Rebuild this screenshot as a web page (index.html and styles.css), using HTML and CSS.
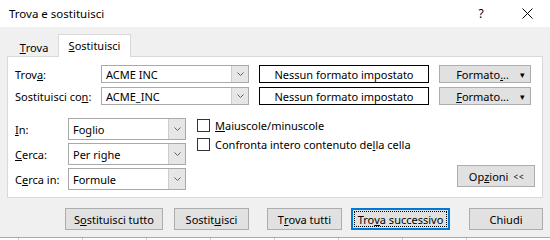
FILE: index.html
```html
<!DOCTYPE html>
<html lang="it">
<head>
<meta charset="utf-8">
<title>Trova e sostituisci</title>
<link rel="stylesheet" href="styles.css">
</head>
<body>
<div class="titlebar">
  <span class="title">Trova e sostituisci</span>
  <span class="help">?</span>
  <span class="close"><svg width="11" height="11" viewBox="0 0 11 11"><path d="M0.5 0.5 L10.5 10.5 M10.5 0.5 L0.5 10.5" stroke="#000" stroke-width="1" fill="none"/></svg></span>
</div>

<div class="tabs">
  <div class="tab"><u>T</u>rova</div>
  <div class="tab active"><u>S</u>ostituisci</div>
</div>

<div class="panel">
  <div class="find-grid">
    <label class="lbl">Trov<u>a</u>:</label>
    <div class="combo"><span class="value">ACME INC</span><span class="drop"><svg width="7" height="4" viewBox="0 0 7 4"><path d="M0.5 0.5 L3.5 3.5 L6.5 0.5" stroke="#606060" fill="none"/></svg></span></div>
    <div class="fmt-box">Nessun formato impostato</div>
    <div class="fmt-btn"><span>Formato<u>.</u>..</span><span class="arrow">▾</span></div>

    <label class="lbl">Sostituisci co<u>n</u>:</label>
    <div class="combo"><span class="value">ACME_INC</span><span class="drop"><svg width="7" height="4" viewBox="0 0 7 4"><path d="M0.5 0.5 L3.5 3.5 L6.5 0.5" stroke="#606060" fill="none"/></svg></span></div>
    <div class="fmt-box">Nessun formato impostato</div>
    <div class="fmt-btn"><span><u>F</u>ormato...</span><span class="arrow">▾</span></div>
  </div>

  <div class="options">
    <div class="opt-grid">
      <label class="lbl"><u>I</u>n:</label>
      <div class="combo tall"><span class="value">Foglio</span><span class="drop"><svg width="7" height="4" viewBox="0 0 7 4"><path d="M0.5 0.5 L3.5 3.5 L6.5 0.5" stroke="#606060" fill="none"/></svg></span></div>
      <label class="lbl"><u>C</u>erca:</label>
      <div class="combo tall"><span class="value">Per righe</span><span class="drop"><svg width="7" height="4" viewBox="0 0 7 4"><path d="M0.5 0.5 L3.5 3.5 L6.5 0.5" stroke="#606060" fill="none"/></svg></span></div>
      <label class="lbl">C<u>e</u>rca in:</label>
      <div class="combo tall"><span class="value">Formule</span><span class="drop"><svg width="7" height="4" viewBox="0 0 7 4"><path d="M0.5 0.5 L3.5 3.5 L6.5 0.5" stroke="#606060" fill="none"/></svg></span></div>
    </div>
    <div class="checks">
      <div class="check"><span class="box"></span><span><u>M</u>aiuscole/minuscole</span></div>
      <div class="check"><span class="box"></span><span>Confronta intero contenuto de<u>l</u>la cella</span></div>
    </div>
    <div class="spacer"></div>
    <div class="btn opzioni">Op<u>z</u>ioni<span class="chev">&lt; &lt;</span></div>
  </div>
</div>

<div class="actions">
  <div class="btn wide">S<u>o</u>stituisci tutto</div>
  <div class="btn std gap-11">Sostit<u>u</u>isci</div>
  <div class="btn std gap-18">T<u>r</u>ova tutti</div>
  <div class="btn wide focus gap-9">Tro<u>v</u>a successivo</div>
  <div class="btn std close-btn gap-19">Chiudi</div>
</div>

<div class="sheet-edge"></div>
</body>
</html>
```

FILE: styles.css
```css
* {
  box-sizing: border-box;
}

body {
  margin: 0;
  width: 550px;
  height: 240px;
  overflow: hidden;
  background: #f0f0f0;
  font-family: "Noto Sans", "Open Sans", sans-serif;
  font-size: 11px;
  color: #000;
}

u {
  text-decoration: underline;
  text-underline-offset: 1px;
}

/* title bar */
.titlebar {
  height: 27px;
  background: #fff;
  display: flex;
  align-items: center;
  padding-left: 9px;
}

.title {
  flex: 1;
  font-size: 11.5px;
}

.help,
.close {
  width: 46px;
  display: flex;
  justify-content: center;
  align-items: center;
  font-size: 12px;
}

/* tabs */
.tabs {
  display: flex;
  align-items: flex-end;
  height: 22px;
  margin-top: 7px;
  padding-left: 10px;
}

.tab {
  width: 48px;
  height: 18px;
  display: flex;
  align-items: center;
  justify-content: center;
}

.tab.active {
  position: relative;
  z-index: 1;
  width: 73px;
  height: 23px;
  margin-bottom: -1px;
  padding-bottom: 2px;
  background: #fff;
  border: 1px solid #d9d9d9;
  border-bottom: none;
}

/* panel */
.panel {
  margin: 0 7px;
  background: #fff;
  border: 1px solid #d9d9d9;
  padding: 8px 7px 7px 7px;
}

.find-grid {
  display: grid;
  grid-template-columns: 76px 148px 170px 92px;
  grid-auto-rows: 18px;
  column-gap: 10px;
  row-gap: 4px;
}

.lbl {
  display: flex;
  align-items: center;
  white-space: nowrap;
}

.combo {
  display: flex;
  border: 1px solid #a9a9a9;
  background: #fff;
}

.combo .value {
  flex: 1;
  display: flex;
  align-items: center;
  padding-left: 4px;
}

.combo .drop {
  width: 17px;
  display: flex;
  align-items: center;
  justify-content: center;
  background: #e6e6e6;
  border-left: 1px solid #cccccc;
}

.fmt-box {
  border: 1px solid #000;
  display: flex;
  align-items: center;
  justify-content: center;
}

.fmt-btn {
  display: flex;
  align-items: center;
  justify-content: flex-end;
  background: #e1e1e1;
  border: 1px solid #adadad;
  padding-right: 5px;
}

.fmt-btn .arrow {
  margin-left: 11px;
  font-size: 9px;
}

/* options */
.options {
  display: flex;
  margin-top: 13px;
}

.opt-grid {
  display: grid;
  grid-template-columns: 53px 118px;
  grid-auto-rows: 22px;
  row-gap: 3px;
}

.checks {
  margin-left: 11px;
  margin-top: 1px;
  display: flex;
  flex-direction: column;
  gap: 6px;
}

.check {
  display: flex;
  align-items: center;
  height: 13px;
  gap: 5px;
}

.check .box {
  width: 13px;
  height: 13px;
  border: 1px solid #333;
  background: #fff;
}

.spacer {
  flex: 1;
}

.btn {
  height: 22px;
  display: flex;
  align-items: center;
  justify-content: center;
  background: #e1e1e1;
  border: 1px solid #adadad;
  white-space: nowrap;
}

.opzioni {
  align-self: flex-end;
  width: 78px;
  margin-bottom: 3px;
}

.opzioni .chev {
  margin-left: 5px;
  font-size: 8px;
  letter-spacing: -0.5px;
}

/* bottom buttons */
.actions {
  display: flex;
  margin-top: 10px;
  padding-left: 65px;
}

.btn.wide {
  width: 98px;
}

.btn.focus {
  width: 99px;
  border: 2px solid #0078d7;
  outline: 1px dotted #000;
  outline-offset: -4px;
}

.btn.std {
  width: 75px;
}

.btn.close-btn {
  width: 74px;
}

.gap-9 { margin-left: 9px; }
.gap-11 { margin-left: 11px; }
.gap-18 { margin-left: 18px; }
.gap-19 { margin-left: 19px; }

/* sheet grid peeking below the dialog */
.sheet-edge {
  margin-top: 7px;
  height: 3px;
  border-top: 1px solid #a8a8a8;
  background-color: #fff;
  background-image: repeating-linear-gradient(to right, transparent 0 63px, #d0d0d0 63px 64px);
  background-position: -45px 0;
}
```
